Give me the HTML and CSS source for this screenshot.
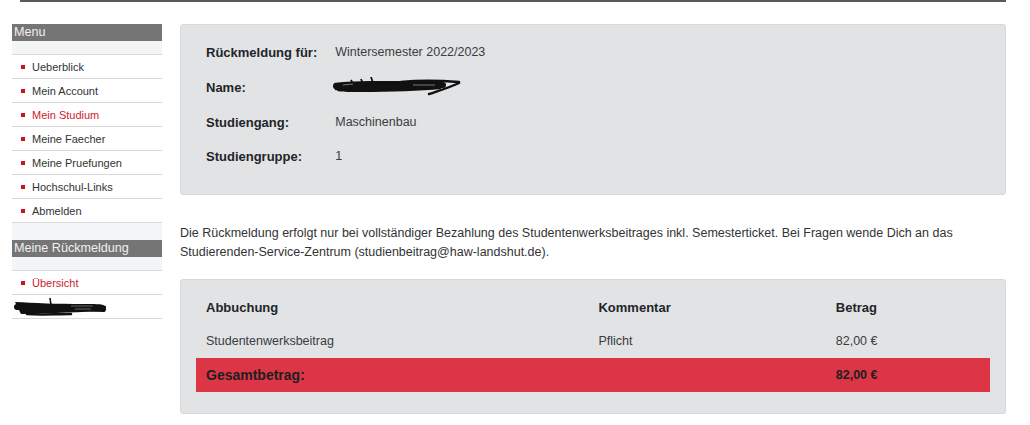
FILE: index.html
```html
<!DOCTYPE html>
<html lang="de">
<head>
<meta charset="utf-8">
<title>Rückmeldung</title>
<link rel="stylesheet" href="styles.css">
</head>
<body>
<div class="topline"></div>
<div class="layout">
  <aside class="sidebar">
    <div class="side-head">Menu</div>
    <ul class="side-list first">
      <li>Ueberblick</li>
      <li>Mein Account</li>
      <li class="active">Mein Studium</li>
      <li>Meine Faecher</li>
      <li>Meine Pruefungen</li>
      <li>Hochschul-Links</li>
      <li>Abmelden</li>
    </ul>
    <div class="side-head">Meine Rückmeldung</div>
    <ul class="side-list">
      <li class="active">Übersicht</li>
      <li class="redacted">
        <svg width="96" height="20" viewBox="0 0 96 20">
          <path d="M2 5 C20 6, 45 7, 70 7 S88 8, 93 9 L92 14 C70 15, 40 16, 8 17 Z" fill="#111"/>
          <path d="M4 10 C25 11, 50 12, 72 11 L90 12" stroke="#111" stroke-width="6" fill="none" stroke-linecap="round"/>
          <path d="M14 17 C30 18, 40 17, 58 17" stroke="#111" stroke-width="2.5" fill="none" stroke-linecap="round"/>
          <path d="M37 1 L38 8" stroke="#111" stroke-width="1.6" fill="none"/>
          <path d="M58 9 L80 9 M62 12 L78 12" stroke="#666" stroke-width="1" fill="none"/>
        </svg>
      </li>
    </ul>
  </aside>
  <main class="content">
    <section class="panel">
      <table class="info">
        <tr><th>Rückmeldung für:</th><td>Wintersemester 2022/2023</td></tr>
        <tr class="tall"><th>Name:</th><td>
          <svg class="scribble" width="132" height="20" viewBox="0 0 132 20">
            <path d="M3 6 C20 4, 40 4, 60 4 S90 4, 108 5 L110 12 C90 14, 60 15, 30 15 S10 14, 4 13 Z" fill="#111"/>
            <path d="M5 9 C30 10, 55 10, 75 9 S98 8, 112 8" stroke="#111" stroke-width="6" fill="none" stroke-linecap="round"/>
            <path d="M70 5 C90 3, 115 4, 128 5" stroke="#111" stroke-width="2.6" fill="none" stroke-linecap="round"/>
            <path d="M128 6 C120 10, 110 13, 98 17" stroke="#111" stroke-width="2.4" fill="none" stroke-linecap="round"/>
            <path d="M40 0 L42 6 M30 2 L32 7 M20 3 L22 7" stroke="#111" stroke-width="1.8" fill="none"/>
            <path d="M12 8 L22 7 M82 8 L104 8" stroke="#777" stroke-width="1" fill="none"/>
          </svg>
        </td></tr>
        <tr><th>Studiengang:</th><td>Maschinenbau</td></tr>
        <tr><th>Studiengruppe:</th><td>1</td></tr>
      </table>
    </section>
    <p class="note">Die Rückmeldung erfolgt nur bei vollständiger Bezahlung des Studentenwerksbeitrages inkl. Semesterticket. Bei Fragen wende Dich an das Studierenden-Service-Zentrum (studienbeitrag@haw-landshut.de).</p>
    <section class="panel">
      <table class="fees">
        <tr class="head"><th class="c1">Abbuchung</th><th class="c2">Kommentar</th><th class="c3">Betrag</th></tr>
        <tr><td>Studentenwerksbeitrag</td><td>Pflicht</td><td>82,00 €</td></tr>
        <tr class="total"><td class="total-label">Gesamtbetrag:</td><td></td><td>82,00 €</td></tr>
      </table>
    </section>
  </main>
</div>
</body>
</html>
```

FILE: styles.css
```css
body {
  margin: 0;
  font-family: "Liberation Sans", Arial, sans-serif;
  background: #fff;
  color: #333;
}

.topline {
  margin-left: 20px;
  width: 986px;
  height: 2px;
  background: #5a5a5a;
}

.layout {
  display: flex;
  gap: 18px;
  padding: 22px 0 0 12px;
}

.sidebar {
  width: 150px;
  flex: none;
}

.side-head {
  height: 17px;
  line-height: 17px;
  background: #757575;
  color: #f0f0f0;
  font-size: 12.6px;
  padding-left: 2px;
}

.side-list {
  list-style: none;
  margin: 0;
  padding: 13px 0 0;
  background: #f4f5f7;
}

.side-list.first {
  padding-bottom: 17px;
}

.side-list li {
  display: flex;
  align-items: center;
  height: 23px;
  padding-left: 9px;
  background: #fff;
  border-bottom: 1px solid #d9d9d9;
  font-size: 11px;
  color: #333;
}

.side-list li:first-child {
  border-top: 1px solid #d9d9d9;
}

.side-list li::before {
  content: "";
  width: 4px;
  height: 4px;
  background: #cc1122;
  margin-right: 7px;
}

.side-list li.active {
  color: #d0202f;
}

.side-list li.redacted {
  padding-left: 1px;
}

.side-list li.redacted::before {
  display: none;
}

.content {
  width: 826px;
  flex: none;
}

.panel {
  background: #e2e3e5;
  border: 1px solid #d6d8db;
  border-radius: 3px;
  padding: 10px 15px 21px;
}

table {
  border-collapse: collapse;
  width: 100%;
}

th, td {
  padding: 0 10px;
  height: 34px;
  text-align: left;
  vertical-align: middle;
}

th {
  font-size: 13px;
  font-weight: bold;
  color: #212529;
  white-space: nowrap;
}

td {
  font-size: 12.5px;
  color: #383d41;
}

.info th {
  width: 111px;
  padding-right: 8px;
}

.info tr.tall th,
.info tr.tall td {
  height: 36px;
}

.scribble {
  display: block;
  margin-left: -4px;
}

.note {
  margin: 29px 0 17px;
  font-size: 12.5px;
  line-height: 19px;
  color: #333;
}

.fees {
  table-layout: fixed;
}

.fees .c1 { width: 372px; }
.fees .c2 { width: 217px; }
.fees .c3 { width: 144px; }

.fees tr.total td {
  background: #dc3545;
  color: #1e1e22;
  font-weight: bold;
  font-size: 12.5px;
}

.fees tr.total td.total-label {
  font-size: 14px;
}
```
